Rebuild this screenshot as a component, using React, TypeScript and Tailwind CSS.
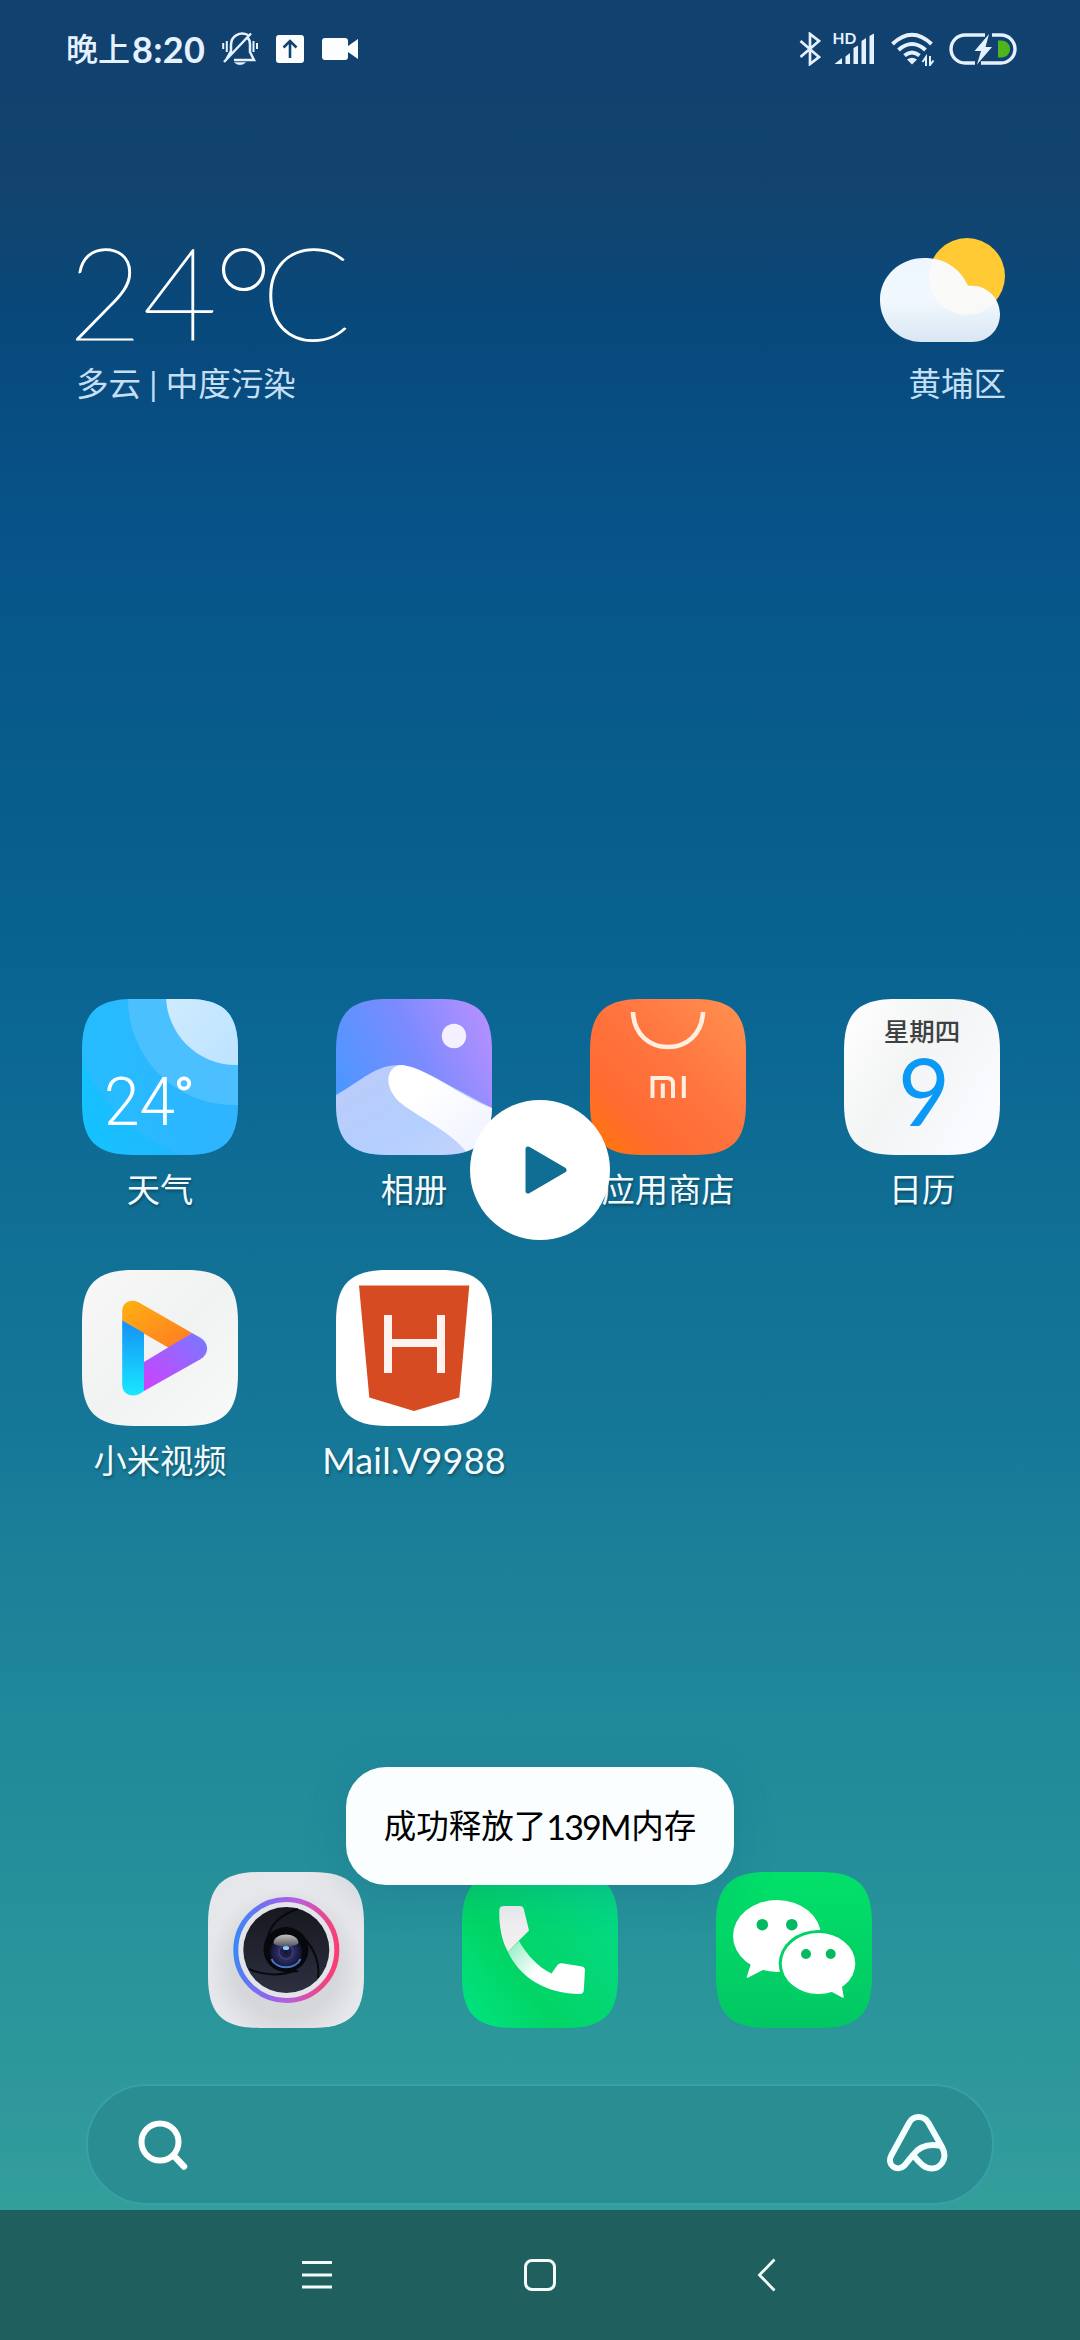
import React from "react";

const SQUIRCLE =
  "M0 52C0 14 14 0 52 0H104C142 0 156 14 156 52V104C156 142 142 156 104 156H52C14 156 0 142 0 104Z";

function Tile({ id, children }: { id: string; children: React.ReactNode }) {
  return (
    <svg viewBox="0 0 156 156" className="block size-[156px] shrink-0">
      <clipPath id={id + "-clip"}>
        <path d={SQUIRCLE} />
      </clipPath>
      <g clipPath={`url(#${id}-clip)`}>{children}</g>
    </svg>
  );
}

function WeatherTile() {
  return (
    <Tile id="weather">
      <linearGradient id="wBg" x1="0" y1="0.6" x2="1" y2="0.4">
        <stop offset="0" stopColor="#16c1ff" />
        <stop offset="1" stopColor="#2bafff" />
      </linearGradient>
      <linearGradient id="wSun" x1="0" y1="0" x2="1" y2="1">
        <stop offset="0" stopColor="#d8eeff" />
        <stop offset="1" stopColor="#b5e0ff" />
      </linearGradient>
      <rect width="156" height="156" fill="url(#wBg)" />
      <circle cx="152" cy="0" r="164" fill="#38b8ff" opacity="0.45" />
      <circle cx="152" cy="0" r="106" fill="#55c3ff" opacity="0.75" />
      <circle cx="154" cy="-4" r="70" fill="url(#wSun)" />
      <text x="22" y="125.5" fontSize="67" className="fill-white font-['Roboto'] font-light" textLength="71" lengthAdjust="spacingAndGlyphs">24</text>
      <circle cx="102" cy="84.5" r="5.2" fill="none" stroke="#fff" strokeWidth="3.8" />
    </Tile>
  );
}

function GalleryTile() {
  return (
    <Tile id="gallery">
      <linearGradient id="gBg" x1="0" y1="0.65" x2="1" y2="0.2">
        <stop offset="0" stopColor="#4898ff" />
        <stop offset="0.55" stopColor="#7b8bff" />
        <stop offset="1" stopColor="#b48fff" />
      </linearGradient>
      <linearGradient id="gDune" x1="0" y1="0" x2="1" y2="1">
        <stop offset="0" stopColor="#bccbf8" />
        <stop offset="0.6" stopColor="#b4cfff" />
        <stop offset="1" stopColor="#c8d4fb" />
      </linearGradient>
      <linearGradient id="gSnow" x1="0" y1="0" x2="1" y2="1">
        <stop offset="0.3" stopColor="#fff" />
        <stop offset="1" stopColor="#eef2ff" />
      </linearGradient>
      <rect width="156" height="156" fill="url(#gBg)" />
      <path d="M0 96C26 81 40 66 63 66C84 67 100 80 156 109V156H0Z" fill="url(#gDune)" />
      <path d="M63 66C88 66 126 99 156 109V156H133C116 133 84 119 66 105C50 93 47 71 63 66Z" fill="url(#gSnow)" />
      <circle cx="118" cy="37" r="12.2" fill="#f4f0ff" />
    </Tile>
  );
}

function StoreTile() {
  return (
    <Tile id="store">
      <linearGradient id="sBg" x1="0" y1="1" x2="1" y2="0">
        <stop offset="0" stopColor="#ff7800" />
        <stop offset="0.25" stopColor="#ff6b32" />
        <stop offset="0.55" stopColor="#ff743f" />
        <stop offset="1" stopColor="#ff9150" />
      </linearGradient>
      <rect width="156" height="156" fill="url(#sBg)" />
      <path d="M43 13C44 36 60 48 78 48S112 36 113 13" fill="none" stroke="#ffefe0" strokeWidth="4.6" />
      <path d="M62.5 99V79H77Q83 79 83 85V99M72.8 84.5V99M93.8 77V99" fill="none" stroke="#ffefe0" strokeWidth="4" />
    </Tile>
  );
}

function CalendarTile() {
  return (
    <Tile id="calendar">
      <linearGradient id="cBg" x1="0" y1="0" x2="1" y2="0.6">
        <stop offset="0" stopColor="#fff" />
        <stop offset="0.5" stopColor="#f3f4f4" />
        <stop offset="1" stopColor="#fafbff" />
      </linearGradient>
      <rect width="156" height="156" fill="url(#cBg)" />
      <text x="78" y="42" fontSize="25.5" textAnchor="middle" className="fill-[#3d4142] font-['Noto_Sans_CJK_SC',sans-serif] font-medium">星期四</text>
      <text x="80" y="127" fontSize="94" textAnchor="middle" className="fill-[#0a99f5] font-['Lato'] font-normal" textLength="52" lengthAdjust="spacingAndGlyphs">9</text>
    </Tile>
  );
}

function VideoTile() {
  return (
    <Tile id="video">
      <linearGradient id="vBg" x1="0" y1="0" x2="1" y2="1">
        <stop offset="0" stopColor="#f8f8f8" />
        <stop offset="0.5" stopColor="#f1f2f2" />
        <stop offset="1" stopColor="#f8fafa" />
      </linearGradient>
      <linearGradient id="vO" x1="0" y1="0" x2="1" y2="1">
        <stop offset="0" stopColor="#ffb013" />
        <stop offset="1" stopColor="#ff7a22" />
      </linearGradient>
      <linearGradient id="vB" x1="0" y1="0" x2="0" y2="1">
        <stop offset="0" stopColor="#1590f7" />
        <stop offset="1" stopColor="#18e8ff" />
      </linearGradient>
      <linearGradient id="vP" x1="0" y1="1" x2="1" y2="0">
        <stop offset="0" stopColor="#d040ff" />
        <stop offset="1" stopColor="#757bff" />
      </linearGradient>
      <rect width="156" height="156" fill="url(#vBg)" />
      <path d="M40.2 51V41C40.2 32 49.5 28 57 32.5L110 63L87 78L40.2 51Z" fill="url(#vO)" />
      <path d="M40.2 50.5L62 63V121C51 130 40.2 124 40.2 115Z" fill="url(#vB)" />
      <path d="M110 63L118 67.5C127.5 73 127.5 84 118 89.5L62 121V92Z" fill="url(#vP)" />
    </Tile>
  );
}

function MailTile() {
  return (
    <Tile id="mail">
      <rect width="156" height="156" fill="#fff" />
      <path d="M23 15.5H133.3L123.3 127.5L78 141L33.3 127.5Z" fill="#d64b22" />
      <path d="M48 45h8v24h45V45h8v58h-8V77H56v26h-8Z" fill="#fff3f0" />
    </Tile>
  );
}

function CameraTile() {
  return (
    <Tile id="camera">
      <radialGradient id="kBg" cx="0.5" cy="0.6" r="0.55">
        <stop offset="0.6" stopColor="#d6d7da" />
        <stop offset="0.9" stopColor="#e6e7ea" />
      </radialGradient>
      <linearGradient id="kRing" x1="0" y1="0.5" x2="1" y2="0.6">
        <stop offset="0" stopColor="#3f86f5" />
        <stop offset="0.25" stopColor="#7a6cf0" />
        <stop offset="0.55" stopColor="#b65fe0" />
        <stop offset="0.85" stopColor="#e8488f" />
        <stop offset="1" stopColor="#fb3c74" />
      </linearGradient>
      <linearGradient id="kBody" x1="0" y1="0" x2="0" y2="1">
        <stop offset="0" stopColor="#17181f" />
        <stop offset="1" stopColor="#2c3040" />
      </linearGradient>
      <radialGradient id="kLens" cx="0.5" cy="0.55" r="0.5">
        <stop offset="0" stopColor="#14162e" />
        <stop offset="0.5" stopColor="#2a2b5c" />
        <stop offset="0.8" stopColor="#171a3d" />
        <stop offset="1" stopColor="#05060c" />
      </radialGradient>
      <linearGradient id="kShine" x1="0" y1="0" x2="0" y2="1">
        <stop offset="0" stopColor="#c2c2c4" />
        <stop offset="1" stopColor="#55555c" />
      </linearGradient>
      <rect width="156" height="156" fill="url(#kBg)" />
      <circle cx="78.3" cy="78" r="50.5" fill="#e3e4e8" stroke="url(#kRing)" strokeWidth="5" />
      <circle cx="78.3" cy="78" r="43" fill="url(#kBody)" />
      <path d="M90 37C74 42 62 52 59 68M58 68C56 90 70 103 90 99M41 97C54 103 72 105 88 98M98 68C108 80 112 92 110 106" fill="none" stroke="#08090d" strokeWidth="2" />
      <circle cx="78" cy="77.5" r="22.5" fill="#07080c" />
      <circle cx="78" cy="78.5" r="17.5" fill="url(#kLens)" />
      <path d="M63.5 87C68 98 88 98 92.500 87" fill="none" stroke="#4776c9" strokeWidth="2" />
      <circle cx="78" cy="80" r="7" fill="none" stroke="#3d3e80" strokeWidth="1.5" />
      <path d="M65.500 71C66 59.500 90 59.500 90.500 71C88 75.500 68 75.500 65.500 71Z" fill="url(#kShine)" />
      <ellipse cx="78" cy="76" rx="3.200" ry="2" fill="#8fc6ff" />
    </Tile>
  );
}

function PhoneTile() {
  return (
    <Tile id="phone">
      <linearGradient id="pBg" x1="0" y1="1" x2="1" y2="0.3">
        <stop offset="0" stopColor="#00e583" />
        <stop offset="0.4" stopColor="#02d565" />
        <stop offset="1" stopColor="#04d983" />
      </linearGradient>
      <linearGradient id="pArc" gradientUnits="userSpaceOnUse" x1="46" y1="76" x2="84" y2="108">
        <stop offset="0" stopColor="#96f0c4" />
        <stop offset="0.75" stopColor="#fff" />
      </linearGradient>
      <rect width="156" height="156" fill="url(#pBg)" />
      <path d="M46 80L57 69C65 83 76 95 89.5 101.5L95.5 93Q97 91 100 91.3L120 94.5Q123 95 123 98L121.8 118Q121.5 122 118 122C85 122 58 106 46 80Z" fill="url(#pArc)" />
      <path d="M42 34H58Q61 34 61.8 37L67 58.5L56.5 69L46 80C39 67 37 53 37.3 38Q37.5 34 42 34Z" fill="#f1eff0" />
    </Tile>
  );
}

function WeChatTile() {
  return (
    <Tile id="wechat">
      <linearGradient id="xBg" x1="0" y1="0" x2="0" y2="1">
        <stop offset="0" stopColor="#02e069" />
        <stop offset="1" stopColor="#02c763" />
      </linearGradient>
      <rect width="156" height="156" fill="url(#xBg)" />
      <ellipse cx="61" cy="64" rx="44" ry="36" fill="#fff" />
      <path d="M36 91L31.5 105L47 97Z" fill="#fff" stroke="#fff" strokeLinejoin="round" strokeWidth="1.5" />
      <ellipse cx="102.5" cy="91.5" rx="39.8" ry="33.5" fill="#02d265" />
      <ellipse cx="102.5" cy="91.5" rx="36.8" ry="30.5" fill="#fff" />
      <path d="M125 113L127 125L114 118Z" fill="#fff" stroke="#fff" strokeLinejoin="round" strokeWidth="1.5" />
      <g fill="#05b862">
        <circle cx="46.3" cy="52.7" r="5.8" />
        <circle cx="75.8" cy="52.7" r="5.8" />
        <circle cx="90" cy="82" r="5" />
        <circle cx="114.7" cy="82" r="5" />
      </g>
    </Tile>
  );
}

function AppItem({ label, latin, children }: { label: string; latin?: boolean; children: React.ReactNode }) {
  return (
    <div className="flex w-[254px] flex-col items-center">
      {children}
      <span
        className={
          (latin ? "text-[36px] tracking-[0.2px] " : "text-[33.3px] ") +
          "mt-[10px] h-[50px] leading-[48px] whitespace-nowrap text-[#f2fbff] [text-shadow:1px_2px_3px_rgba(0,0,0,0.35)]"
        }
      >
        {label}
      </span>
    </div>
  );
}

function StatusBar() {
  return (
    <header className="flex h-[98px] items-center justify-between pr-[63px] pl-[66px] text-[#e6f1ff]">
      <div className="flex items-center">
        <div className="flex w-[156px] items-center text-[32px] leading-[40px] font-medium">
          <span>晚上</span>
          <span className="ml-[2px] font-['Lato'] text-[36px] font-bold tracking-[0.3px]">8:20</span>
        </div>
        <svg viewBox="0 0 36 34" className="h-[34px] w-[36px]" fill="none" stroke="currentColor" strokeWidth="2.5">
          <path d="M26 3C18-1 9 4 9 13V19L4 28M12 28H32L28 20V12Q28 8 25.5 5.5M29 1.5L2 30" />
          <path d="M12.5 30.5H23.5Q18 35 12.5 30.5Z" fill="currentColor" strokeWidth="0.5" />
          <path d="M1.2 11V17M4.8 9V20M31.5 9V20M35 11V17" strokeWidth="2" />
        </svg>
        <svg viewBox="0 0 28 28" className="ml-[18px] size-[28px]">
          <rect width="28" height="28" rx="3" fill="#fbfdff" />
          <path d="M14 23V6M7.5 12.5L14 6L20.5 12.5" fill="none" stroke="#10436f" strokeWidth="2.6" />
        </svg>
        <svg viewBox="0 0 36 24" className="ml-[18px] h-[24px] w-[36px]" fill="#fbfdff">
          <path d="M3 1H23Q26 1 26 4V9L36 2V22L26 15V20Q26 23 23 23H3Q0 23 0 20V4Q0 1 3 1Z" />
        </svg>
      </div>
      <div className="flex items-center">
        <svg viewBox="0 0 22 34" className="h-[34px] w-[22px]" fill="none" stroke="currentColor" strokeWidth="2.7">
          <path d="M1.5 9L20 25L11 32V2L20 9L1.5 25" />
        </svg>
        <svg viewBox="0 0 42 34" className="ml-[12px] h-[34px] w-[42px] overflow-visible" fill="currentColor">
          <path d="M1.5 32L9 26V32ZM12.5 24.5L17 21V32H12.5ZM20.5 16L25 13.5V32H20.5ZM28.5 9L33 6V32H28.5ZM36.5 4L41 1.5V32H36.5Z" />
          <text x="-0.5" y="11.5" fontSize="15.5" className="font-['Lato'] font-bold">HD</text>
        </svg>
        <svg viewBox="0 0 44 34" className="ml-[16px] h-[34px] w-[44px]" fill="none" stroke="currentColor" strokeWidth="4">
          <path d="M1.5 12Q21 -6.5 40.500 12M7.5 18Q21 6 34.5 18M13.5 23.5Q21 17.5 28.5 23.5" />
          <path d="M16 27.500Q21 24 26 27.500L21 32.500Z" fill="currentColor" stroke="none" />
          <path d="M35 34V25L31.5 30M39 24V33L42.500 28.500" strokeWidth="2" />
        </svg>
        <svg viewBox="0 0 68 32" className="ml-[14px] h-[32px] w-[68px]" fill="none">
          <path d="M36 2H16A14 14 0 0 0 16 30H26M32 30H52A14 14 0 0 0 52 2H43" stroke="#e6f1ff" strokeWidth="3.4" />
          <path d="M49 7.5H52C64 7.5 64 24.5 52 24.5H49Z" fill="#4fb51d" />
          <path d="M40 1L25.5 18H32L28 31.5L43 14H36.5Z" fill="#e6f1ff" />
        </svg>
      </div>
    </header>
  );
}

function WeatherWidget() {
  return (
    <section className="flex h-[322px] justify-between pt-[128px] pr-[74px] pl-[76px] text-[#c4dff4]">
      <div className="flex flex-col">
        <svg viewBox="0 0 272 132" className="h-[132px] w-[272px] overflow-visible" fill="#fff" stroke="#fff">
          <text x="-8" y="114" fontSize="128" textLength="149" lengthAdjust="spacingAndGlyphs" strokeWidth="1.3" className="font-['Lato'] font-thin">24</text>
          <circle cx="167.5" cy="43.5" r="20" fill="none" strokeWidth="3.2" />
          <text x="185" y="114" fontSize="128" textLength="90" lengthAdjust="spacingAndGlyphs" strokeWidth="1.3" className="font-['Lato'] font-thin">C</text>
        </svg>
        <span className="text-[32.5px] leading-[52px] whitespace-nowrap">多云 | 中度污染</span>
      </div>
      <div className="flex flex-col items-end">
        <svg viewBox="20 6 126 132" className="h-[132px] w-[126px]">
          <linearGradient id="cloud" x1="0" y1="0" x2="0" y2="1">
            <stop offset="0" stopColor="#edf6ff" />
            <stop offset="0.5" stopColor="#f2f8fe" />
            <stop offset="1" stopColor="#d9e7f3" />
          </linearGradient>
          <clipPath id="cloudClip">
            <path d="M64 38C84 38 100 48 108 66C126 64 140 78 140 94C140 110 128 122 112 122H62C38 122 20 103 20 80C20 56 40 38 64 38Z" />
          </clipPath>
          <circle cx="107" cy="56" r="38" fill="#ffca34" />
          <g clipPath="url(#cloudClip)">
            <rect x="20" y="38" width="120" height="84" fill="url(#cloud)" />
            <circle cx="107" cy="57" r="38" fill="#fdfbf6" opacity="0.7" />
          </g>
        </svg>
        <span className="text-[32.5px] leading-[52px]">黄埔区</span>
      </div>
    </section>
  );
}

export default function App() {
  return (
    <div className="relative flex h-[2340px] w-[1080px] flex-col overflow-hidden bg-[linear-gradient(180deg,#11416f_0px,#12446f_200px,#08487a_310px,#07548a_540px,#075f8c_830px,#0a6593_1000px,#106e94_1200px,#157798_1420px,#1d8199_1580px,#208a9a_1750px,#28939a_1950px,#2f999c_2120px,#339f9a_2210px)] font-['Lato','Noto_Sans_CJK_SC',sans-serif]">
      <StatusBar />
      <WeatherWidget />

      <main className="mt-[579px] grid grid-cols-[repeat(4,254px)] gap-y-[55px] pl-[33px]">
        <AppItem label="天气"><WeatherTile /></AppItem>
        <AppItem label="相册"><GalleryTile /></AppItem>
        <AppItem label="应用商店"><StoreTile /></AppItem>
        <AppItem label="日历"><CalendarTile /></AppItem>
        <AppItem label="小米视频"><VideoTile /></AppItem>
        <AppItem label="Mail.V9988" latin><MailTile /></AppItem>
      </main>

      <div className="mt-[386px] flex justify-center gap-[98px]">
        <CameraTile />
        <PhoneTile />
        <WeChatTile />
      </div>

      <div className="mx-auto mt-[56px] flex h-[121px] w-[908px] shrink-0 items-center justify-between rounded-full border-2 border-[#3a9fa9] bg-[#298d91] pr-[43px] pl-[50px]">
        <svg viewBox="0 0 50 50" className="size-[50px]" fill="none" stroke="#fff" strokeLinecap="round">
          <circle cx="22" cy="22" r="18.5" strokeWidth="6" />
          <path d="M36 36L46 46.5" strokeWidth="6.5" />
        </svg>
        <svg viewBox="0 0 62 58" className="mb-[3px] h-[58px] w-[62px]" fill="none" stroke="#f4ffff" strokeWidth="6">
          <path d="M26 41L17.5 51.5C10 58.5 -1 51 4.5 41L22 9C26 1 37 1 41.5 9L55 33C62 46 52 54.5 45 54.5C37 54.5 33 49 26 41C32 33 40 29 54 32" />
        </svg>
      </div>

      <nav className="mt-[5px] flex h-[130px] shrink-0 items-center bg-[#1f605e] pl-[301px]">
        <svg viewBox="0 0 32 34" className="h-[34px] w-[32px]" stroke="#f4fafa" strokeWidth="3">
          <path d="M1 4.5H31M1 17H31M1 29H31" />
        </svg>
        <svg viewBox="0 0 34 34" className="ml-[190px] size-[34px]" fill="none" stroke="#f4fafa" strokeWidth="3">
          <rect x="2.5" y="2.5" width="29" height="29" rx="6.5" />
        </svg>
        <svg viewBox="0 0 20 34" className="ml-[200px] h-[34px] w-[20px]" fill="none" stroke="#f4fafa" strokeWidth="2.8">
          <path d="M17.5 1.5L2.5 17L17.5 32.5" />
        </svg>
      </nav>

      <div className="absolute top-[1767px] left-[346px] flex h-[118px] w-[388px] items-center justify-center rounded-[40px] bg-[#fafeff] text-[32.5px] whitespace-nowrap text-black shadow-[0_8px_40px_rgba(20,90,130,0.25)]">
        <span>成功释放了</span>
        <span className="font-['Lato'] text-[34px] tracking-[-1.8px]">139M</span>
        <span className="ml-[1.5px]">内存</span>
      </div>

      <div className="absolute top-[1100px] left-[470px] flex size-[140px] items-center justify-center rounded-full bg-white">
        <svg viewBox="0 0 44 50" className="ml-[12px] h-[50px] w-[44px]">
          <path d="M4 4V46L40 25Z" fill="#106e94" stroke="#106e94" strokeWidth="5" strokeLinejoin="round" />
        </svg>
      </div>
    </div>
  );
}
